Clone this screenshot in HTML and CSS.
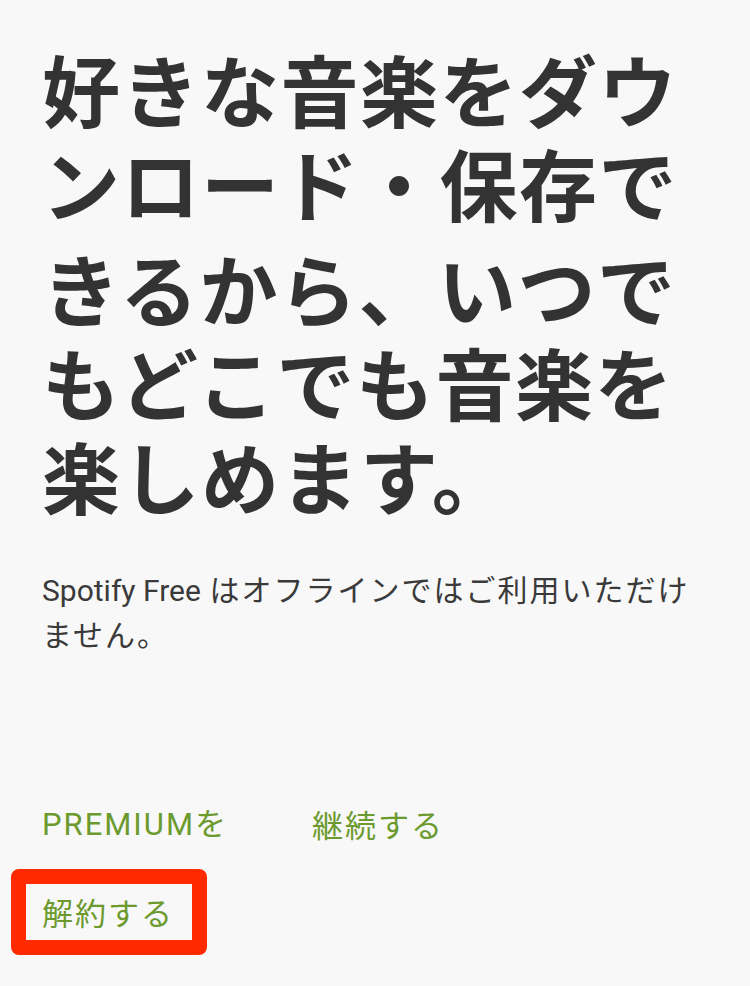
FILE: index.html
```html
<!DOCTYPE html>
<html lang="ja">
<head>
<meta charset="utf-8">
<title>Spotify Premium</title>
<link rel="stylesheet" href="styles.css">
</head>
<body>
<main class="screen">
  <h1 class="headline">
    <span class="headline-part">好きな音楽をダウンロード・保存で</span>
    <span class="headline-part">きるから、いつでもどこでも音楽を楽しめます。</span>
  </h1>
  <p class="note"><span class="latin">Spotify Free</span><span class="jp"> はオフラインではご利用いただけません。</span></p>
  <div class="actions">
    <div class="action-row">
      <a class="action action-first"><span class="latin">PREMIUM</span>を</a>
      <a class="action">継続する</a>
    </div>
    <div class="action-row">
      <span class="highlight"><a class="action">解約する</a></span>
    </div>
  </div>
</main>
</body>
</html>
```
FILE: styles.css
```css
html, body {
  margin: 0;
  padding: 0;
  background: #f8f8f8;
}
body {
  font-family: "Noto Sans CJK JP", "Noto Sans", sans-serif;
  color: #333333;
}
.screen {
  width: 750px;
  height: 986px;
  box-sizing: border-box;
  padding: 41px 0 0 42px;
  overflow: hidden;
}
.headline {
  margin: 0;
  font-size: 78px;
  font-weight: 700;
  line-height: 94px;
  letter-spacing: 1.5px;
  color: #333333;
}
.headline-part {
  display: block;
}
.headline-part + .headline-part {
  margin-top: 11px;
}
.latin {
  font-family: Roboto, "Noto Sans", sans-serif;
  letter-spacing: 0;
}
.note {
  margin: 45px 0 0;
  width: 665px;
  font-size: 30px;
  font-weight: 400;
  line-height: 42px;
  letter-spacing: 2px;
  color: #3a3a3a;
}
.actions {
  margin-top: 148px;
  display: flex;
  flex-direction: column;
  gap: 24px;
}
.action-row {
  display: flex;
  align-items: center;
}
.action {
  font-size: 31px;
  line-height: 40px;
  color: #6c9a2e;
  text-decoration: none;
  letter-spacing: 2px;
}
.action .latin {
  letter-spacing: 2px;
}
.action-first {
  width: 270px;
}
.highlight {
  display: inline-block;
  margin-left: -31px;
  padding: 8px 18px 8px 16px;
  border: 15px solid #ff2a00;
  border-radius: 8px;
}
```
